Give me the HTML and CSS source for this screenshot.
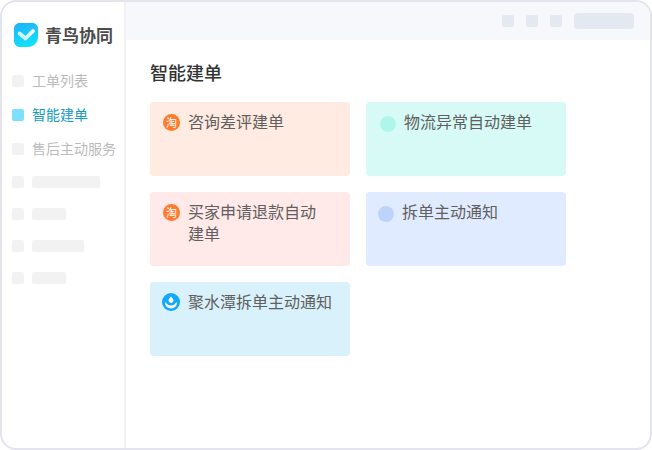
FILE: index.html
```html
<!DOCTYPE html>
<html lang="zh-CN">
<head>
  <meta charset="utf-8">
  <title>青鸟协同</title>
  <link rel="stylesheet" href="styles.css">
</head>
<body>
  <div class="frame">
    <aside class="sidebar">
      <div class="logo">
        <svg class="logo-icon" width="24" height="24" viewBox="0 0 24 24">
          <defs>
            <linearGradient id="logoBg" x1="0" y1="0" x2="0.3" y2="1">
              <stop offset="0" stop-color="#1fb0f8"/>
              <stop offset="1" stop-color="#12e0fc"/>
            </linearGradient>
            <linearGradient id="logoCheck" x1="0" y1="1" x2="1" y2="0">
              <stop offset="0" stop-color="#bff3ff"/>
              <stop offset="1" stop-color="#ffffff"/>
            </linearGradient>
          </defs>
          <path d="M5.500 0h13C21.500 0 24 2.500 24 5.500V14c0 5.500-4.500 10-10 10H6c-3.300 0-6-2.700-6-6V5.500C0 2.500 2.500 0 5.500 0z" fill="url(#logoBg)"/>
          <path d="M5.500 10.500l6 5 7.500-7.500" fill="none" stroke="url(#logoCheck)" stroke-width="3.800" stroke-linecap="round" stroke-linejoin="round"/>
        </svg>
        <span class="logo-text">青鸟协同</span>
      </div>
      <nav class="nav">
        <div class="nav-item"><i class="dot"></i><span>工单列表</span></div>
        <div class="nav-item active"><i class="dot"></i><span>智能建单</span></div>
        <div class="nav-item"><i class="dot"></i><span>售后主动服务</span></div>
        <div class="nav-item skel"><i class="dot"></i><b class="bar w68"></b></div>
        <div class="nav-item skel"><i class="dot"></i><b class="bar w34"></b></div>
        <div class="nav-item skel"><i class="dot"></i><b class="bar w52"></b></div>
        <div class="nav-item skel"><i class="dot"></i><b class="bar w34"></b></div>
      </nav>
    </aside>
    <div class="main">
      <header class="topbar">
        <i class="tool"></i><i class="tool"></i><i class="tool"></i><i class="tool-wide"></i>
      </header>
      <section class="content">
        <h1 class="title">智能建单</h1>
        <div class="cards">
          <div class="card orange">
            <span class="tao">淘</span>
            <p>咨询差评建单</p>
          </div>
          <div class="card teal">
            <i class="circle"></i>
            <p>物流异常自动建单</p>
          </div>
          <div class="card pink">
            <span class="tao">淘</span>
            <p>买家申请退款自动建单</p>
          </div>
          <div class="card blue">
            <i class="circle"></i>
            <p>拆单主动通知</p>
          </div>
          <div class="card sky">
            <svg class="drop" width="18" height="18" viewBox="0 0 18 18">
              <circle cx="9" cy="9" r="9" fill="#0fa9ff"/>
              <path d="M9 3.400c1.600 1.600 2.500 2.800 2.500 4.100a2.500 2.500 0 0 1-5 0c0-1.300.9-2.500 2.500-4.100z" fill="#fff"/>
              <path d="M3.500 8.800c.8 1.500 1.600 2.400 2.600 2.900.9.500 1.900.7 2.900.7s2-.2 2.900-.7c1-.5 1.800-1.400 2.600-2.900 1.300 3.400-1.500 6.600-5.500 6.600S2.200 12.200 3.500 8.800z" fill="#fff"/>
            </svg>
            <p>聚水潭拆单主动通知</p>
          </div>
        </div>
      </section>
    </div>
  </div>
</body>
</html>
```

FILE: styles.css
```css
* { box-sizing: border-box; }

html, body { margin: 0; padding: 0; background: #fff; }

body { font-family: "Noto Sans CJK SC", "Liberation Sans", sans-serif; }

.frame { display: flex; width: 652px; height: 450px; border: 2px solid #e4e4ee; border-radius: 16px; overflow: hidden; background: #fff; }

.sidebar { width: 124px; flex: none; border-right: 2px solid #f2f2f6; padding: 21px 0 0 10px; }

.logo { display: flex; align-items: center; gap: 7px; height: 24px; margin-left: 2px; }
.logo-icon { flex: none; }
.logo-text { margin-bottom: 1px; font-size: 17px; line-height: 24px; font-weight: 700; color: #4c4c4c; white-space: nowrap; }

.nav { margin-top: 17px; }
.nav-item { display: flex; align-items: center; gap: 8px; height: 34px; font-size: 14px; color: #bbb; white-space: nowrap; }
.nav-item span { margin-bottom: 2px; }
.nav-item.skel { height: 32px; }
.nav-item .dot { width: 12px; height: 12px; border-radius: 2px; background: #f2f2f2; flex: none; }
.nav-item.active { color: #149cc4; }
.nav-item.active .dot { background: #7fdfff; }

.bar { display: block; height: 12px; border-radius: 2px; background: #f2f2f2; }
.w68 { width: 68px; }
.w52 { width: 52px; }
.w34 { width: 34px; }

.main { flex: 1; min-width: 0; }

.topbar { display: flex; align-items: center; justify-content: flex-end; gap: 12px; height: 38px; padding-right: 16px; background: #f7f8fc; }
.tool { width: 12px; height: 12px; border-radius: 2px; background: #e4e8f1; }
.tool-wide { width: 60px; height: 16px; border-radius: 4px; background: #e4e8f1; }

.content { padding: 19px 24px 0; }
.title { margin: 0; font-size: 18px; line-height: 26px; font-weight: 500; color: #333; }

.cards { display: grid; grid-template-columns: 200px 200px; grid-auto-rows: 74px; gap: 16px; margin-top: 17px; }

.card { display: flex; align-items: flex-start; gap: 8px; padding: 8px 14px 0 13px; border-radius: 4px; }
.card p { margin: 0; font-size: 16px; line-height: 22px; color: #606060; }

.orange { background: #ffebe1; }
.teal { background: #d7faf6; padding-left: 14px; }
.pink { background: #ffe9e9; padding-right: 24px; }
.blue { background: #e0ebff; padding-left: 12px; }
.sky { background: #d8f1fb; padding-left: 12px; }

.tao { flex: none; width: 17px; height: 17px; margin-top: 4px; border-radius: 50%; background: #ff7a2c; color: #fff; font-size: 11px; line-height: 16px; text-align: center; }

.circle { flex: none; width: 16px; height: 16px; margin-top: 6px; border-radius: 50%; }
.teal .circle { background: #aef5ec; }
.blue .circle { background: #bed3fb; }

.drop { flex: none; margin-top: 3px; }
```
